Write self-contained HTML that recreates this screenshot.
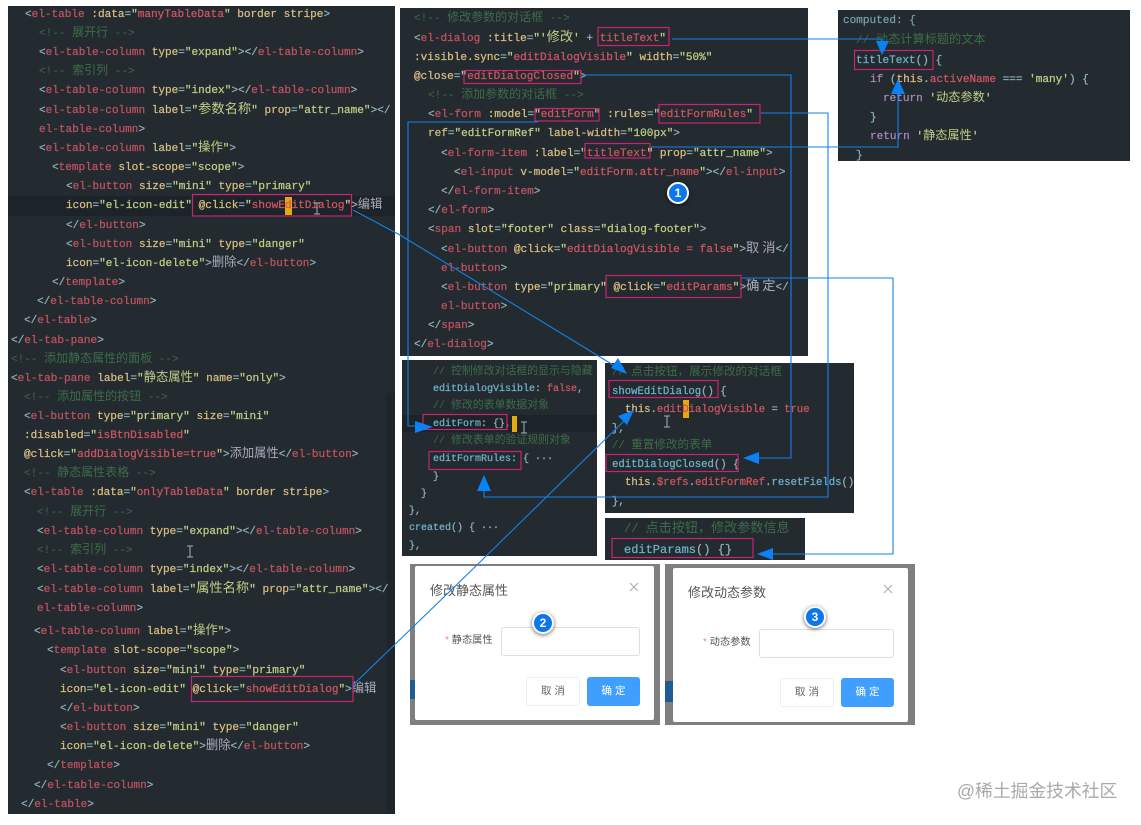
<!DOCTYPE html>
<html><head><meta charset="utf-8"><style>
html,body{margin:0;padding:0;background:#fff}
#r{position:relative;width:1141px;height:825px;overflow:hidden;background:#fff;font-family:"Liberation Sans","Noto Sans CJK SC",sans-serif}
.p{position:absolute;background:#232b31;overflow:hidden}
.l{position:absolute;margin-top:1px;white-space:pre;font-family:"Liberation Mono","Noto Sans CJK SC",monospace;font-size:11.05px;line-height:18px;height:18px;color:#8fb0b5;filter:blur(.3px);-webkit-text-stroke:.25px}
.l b{font-weight:normal;color:#c0525e}
.l i{font-style:normal;color:#d8bd80}
.l s{text-decoration:none;color:#c0cd85}
.l u{text-decoration:none;color:#3d6c47;-webkit-text-stroke:0}
.l em{font-style:normal;color:#cf5560}
.l var{font-style:normal;font-family:"Noto Sans CJK SC",sans-serif;font-size:12.3px;line-height:0;-webkit-text-stroke:0}
.l u var{font-size:12px}
.l var.w{font-size:13.26px}
.l kbd{font-family:inherit;font-size:inherit;line-height:0;color:#6fb0c8}
.l.f{font-size:10px}.l.f var,.l.f u var{font-size:10.9px}
.l.g{font-size:10.62px}.l.g var,.l.g u var{font-size:11.6px}
.l.h{font-size:12px}.l.h var,.l.h u var{font-size:13.1px}
.l.k var,.l.k u var{font-size:12.2px}
.a{position:absolute;box-sizing:border-box}
.c{position:absolute;width:22px;height:22px;box-sizing:border-box;border:2px solid #fff;border-radius:50%;background:#0b76ee;color:#fff;font:bold 12px/18px "Liberation Sans",sans-serif;text-align:center;box-shadow:0 1px 4px rgba(0,0,0,.6)}
.t{position:absolute;white-space:pre;color:#555;filter:blur(.2px)}
</style></head><body><div id="r">

<div class="p" style="left:8px;top:6px;width:387px;height:808px"></div>
<div class="a" style="left:8px;top:196px;width:387px;height:20px;background:#1d2429"></div>
<div class="a" style="left:386px;top:393px;width:9px;height:421px;background:#1e262b"></div>
<div class="a" style="left:285px;top:197px;width:7px;height:18px;background:#e5a90f"></div>

<div class="l" style="left:25px;top:5px">&lt;<b>el-table</b> <i>:data</i>=<s>"</s><em>manyTableData</em><s>"</s> <i>border</i> <i>stripe</i>&gt;</div>
<div class="l" style="left:39px;top:24px"><u>&lt;!-- <var>展开行</var> --&gt;</u></div>
<div class="l" style="left:39px;top:43px">&lt;<b>el-table-column</b> <i>type</i>=<s>"expand"</s>&gt;&lt;/<b>el-table-column</b>&gt;</div>
<div class="l" style="left:39px;top:62px"><u>&lt;!-- <var>索引列</var> --&gt;</u></div>
<div class="l" style="left:39px;top:81px">&lt;<b>el-table-column</b> <i>type</i>=<s>"index"</s>&gt;&lt;/<b>el-table-column</b>&gt;</div>
<div class="l" style="left:39px;top:101px">&lt;<b>el-table-column</b> <i>label</i>=<s>"<var class="w">参数名称</var>"</s> <i>prop</i>=<s>"attr_name"</s>&gt;&lt;/</div>
<div class="l" style="left:39px;top:120px"><b>el-table-column</b>&gt;</div>
<div class="l" style="left:39px;top:139px">&lt;<b>el-table-column</b> <i>label</i>=<s>"<var>操作</var>"</s>&gt;</div>
<div class="l" style="left:52px;top:158px">&lt;<b>template</b> <i>slot-scope</i>=<s>"scope"</s>&gt;</div>
<div class="l" style="left:66px;top:177px">&lt;<b>el-button</b> <i>size</i>=<s>"mini"</s> <i>type</i>=<s>"primary"</s></div>
<div class="l" style="left:66px;top:196px"><i>icon</i>=<s>"el-icon-edit"</s> <i>@click</i>=<s>"</s><em>showEditDialog</em><s>"</s>&gt;<var style="color:#aab">编辑</var></div>
<div class="l" style="left:66px;top:216px">&lt;/<b>el-button</b>&gt;</div>
<div class="l" style="left:66px;top:235px">&lt;<b>el-button</b> <i>size</i>=<s>"mini"</s> <i>type</i>=<s>"danger"</s></div>
<div class="l" style="left:66px;top:254px"><i>icon</i>=<s>"el-icon-delete"</s>&gt;<var style="color:#aab">删除</var>&lt;/<b>el-button</b>&gt;</div>
<div class="l" style="left:52px;top:273px">&lt;/<b>template</b>&gt;</div>
<div class="l" style="left:37px;top:292px">&lt;/<b>el-table-column</b>&gt;</div>
<div class="l" style="left:24px;top:311px">&lt;/<b>el-table</b>&gt;</div>
<div class="l" style="left:11px;top:331px">&lt;/<b>el-tab-pane</b>&gt;</div>
<div class="l" style="left:11px;top:350px"><u>&lt;!-- <var>添加静态属性的面板</var> --&gt;</u></div>
<div class="l" style="left:11px;top:369px">&lt;<b>el-tab-pane</b> <i>label</i>=<s>"<var>静态属性</var>"</s> <i>name</i>=<s>"only"</s>&gt;</div>
<div class="l" style="left:24px;top:388px"><u>&lt;!-- <var>添加属性的按钮</var> --&gt;</u></div>
<div class="l" style="left:24px;top:407px">&lt;<b>el-button</b> <i>type</i>=<s>"primary"</s> <i>size</i>=<s>"mini"</s></div>
<div class="l" style="left:24px;top:426px"><i>:disabled</i>=<s>"</s><em>isBtnDisabled</em><s>"</s></div>
<div class="l" style="left:24px;top:445px"><i>@click</i>=<s>"</s><em>addDialogVisible=true</em><s>"</s>&gt;<var style="color:#aab">添加属性</var>&lt;/<b>el-button</b>&gt;</div>
<div class="l" style="left:24px;top:464px"><u>&lt;!-- <var>静态属性表格</var> --&gt;</u></div>
<div class="l" style="left:24px;top:483px">&lt;<b>el-table</b> <i>:data</i>=<s>"</s><em>onlyTableData</em><s>"</s> <i>border</i> <i>stripe</i>&gt;</div>
<div class="l" style="left:37px;top:503px"><u>&lt;!-- <var>展开行</var> --&gt;</u></div>
<div class="l" style="left:37px;top:522px">&lt;<b>el-table-column</b> <i>type</i>=<s>"expand"</s>&gt;&lt;/<b>el-table-column</b>&gt;</div>
<div class="l" style="left:37px;top:541px"><u>&lt;!-- <var>索引列</var> --&gt;</u></div>
<div class="l" style="left:37px;top:560px">&lt;<b>el-table-column</b> <i>type</i>=<s>"index"</s>&gt;&lt;/<b>el-table-column</b>&gt;</div>
<div class="l" style="left:37px;top:580px">&lt;<b>el-table-column</b> <i>label</i>=<s>"<var class="w">属性名称</var>"</s> <i>prop</i>=<s>"attr_name"</s>&gt;&lt;/</div>
<div class="l" style="left:37px;top:599px"><b>el-table-column</b>&gt;</div>
<div class="l" style="left:34px;top:622px">&lt;<b>el-table-column</b> <i>label</i>=<s>"<var>操作</var>"</s>&gt;</div>
<div class="l" style="left:47px;top:641px">&lt;<b>template</b> <i>slot-scope</i>=<s>"scope"</s>&gt;</div>
<div class="l" style="left:60px;top:661px">&lt;<b>el-button</b> <i>size</i>=<s>"mini"</s> <i>type</i>=<s>"primary"</s></div>
<div class="l" style="left:60px;top:680px"><i>icon</i>=<s>"el-icon-edit"</s> <i>@click</i>=<s>"</s><em>showEditDialog</em><s>"</s>&gt;<var style="color:#aab">编辑</var></div>
<div class="l" style="left:60px;top:699px">&lt;/<b>el-button</b>&gt;</div>
<div class="l" style="left:60px;top:718px">&lt;<b>el-button</b> <i>size</i>=<s>"mini"</s> <i>type</i>=<s>"danger"</s></div>
<div class="l" style="left:60px;top:737px"><i>icon</i>=<s>"el-icon-delete"</s>&gt;<var style="color:#aab">删除</var>&lt;/<b>el-button</b>&gt;</div>
<div class="l" style="left:47px;top:756px">&lt;/<b>template</b>&gt;</div>
<div class="l" style="left:34px;top:776px">&lt;/<b>el-table-column</b>&gt;</div>
<div class="l" style="left:21px;top:795px">&lt;/<b>el-table</b>&gt;</div>

<div class="p" style="left:400px;top:8px;width:408px;height:348px"></div>
<div class="l" style="left:414px;top:9px"><u>&lt;!-- <var>修改参数的对话框</var> --&gt;</u></div>
<div class="l" style="left:414px;top:29px">&lt;<b>el-dialog</b> <i>:title</i>=<s>"'<var class="w">修改</var>'</s> + <em>titleText</em><s>"</s></div>
<div class="l" style="left:414px;top:48px"><i>:visible.sync</i>=<s>"</s><em>editDialogVisible</em><s>"</s> <i>width</i>=<s>"50%"</s></div>
<div class="l" style="left:414px;top:67px"><i>@close</i>=<s>"</s><em>editDialogClosed</em><s>"</s>&gt;</div>
<div class="l" style="left:428px;top:86px"><u>&lt;!-- <var>添加参数的对话框</var> --&gt;</u></div>
<div class="l" style="left:428px;top:105px">&lt;<b>el-form</b> <i>:model</i>=<s>"</s><em>editForm</em><s>"</s> <i>:rules</i>=<s>"</s><em>editFormRules</em><s>"</s></div>
<div class="l" style="left:428px;top:124px"><i>ref</i>=<s>"editFormRef"</s> <i>label-width</i>=<s>"100px"</s>&gt;</div>
<div class="l" style="left:441px;top:144px">&lt;<b>el-form-item</b> <i>:label</i>=<s>"</s><em>titleText</em><s>"</s> <i>prop</i>=<s>"attr_name"</s>&gt;</div>
<div class="l" style="left:454px;top:163px">&lt;<b>el-input</b> <i>v-model</i>=<s>"</s><em>editForm.attr_name</em><s>"</s>&gt;&lt;/<b>el-input</b>&gt;</div>
<div class="l" style="left:441px;top:182px">&lt;/<b>el-form-item</b>&gt;</div>
<div class="l" style="left:428px;top:201px">&lt;/<b>el-form</b>&gt;</div>
<div class="l" style="left:428px;top:220px">&lt;<b>span</b> <i>slot</i>=<s>"footer"</s> <i>class</i>=<s>"dialog-footer"</s>&gt;</div>
<div class="l" style="left:441px;top:240px">&lt;<b>el-button</b> <i>@click</i>=<s>"</s><em>editDialogVisible = false</em><s>"</s>&gt;<var class="w" style="color:#aab">取 消</var>&lt;/</div>
<div class="l" style="left:441px;top:259px"><b>el-button</b>&gt;</div>
<div class="l" style="left:441px;top:278px">&lt;<b>el-button</b> <i>type</i>=<s>"primary"</s> <i>@click</i>=<s>"</s><em>editParams</em><s>"</s>&gt;<var class="w" style="color:#aab">确 定</var>&lt;/</div>
<div class="l" style="left:441px;top:297px"><b>el-button</b>&gt;</div>
<div class="l" style="left:428px;top:316px">&lt;/<b>span</b>&gt;</div>
<div class="l" style="left:414px;top:335px">&lt;/<b>el-dialog</b>&gt;</div>

<div class="p" style="left:838px;top:10px;width:292px;height:151px"></div>
<div class="l k" style="left:843px;top:11px;color:#6fa0ae">computed: {</div>
<div class="l k" style="left:856px;top:31px"><u>// <var>动态计算标题的文本</var></u></div>
<div class="l k" style="left:856px;top:51px"><kbd>titleText</kbd>() {</div>
<div class="l k" style="left:870px;top:70px"><span style="color:#a78ab8">if</span> (<i>this</i>.<em>activeName</em> === <s>'many'</s>) {</div>
<div class="l k" style="left:883px;top:89px"><span style="color:#a78ab8">return</span> <s>'<var>动态参数</var>'</s></div>
<div class="l k" style="left:870px;top:108px">}</div>
<div class="l k" style="left:870px;top:127px"><span style="color:#a78ab8">return</span> <s>'<var>静态属性</var>'</s></div>
<div class="l k" style="left:856px;top:146px">}</div>

<div class="p" style="left:402px;top:360px;width:195px;height:196px"></div>
<div class="a" style="left:402px;top:415px;width:195px;height:17px;background:#1d2429"></div>
<div class="a" style="left:512px;top:416px;width:5px;height:16px;background:#e5a90f"></div>
<div class="l f" style="left:433px;top:363px"><u>// <var>控制修改对话框的显示与隐藏</var></u></div>
<div class="l f" style="left:433px;top:380px"><kbd>editDialogVisible</kbd>: <em>false</em>,</div>
<div class="l f" style="left:433px;top:397px"><u>// <var>修改的表单数据对象</var></u></div>
<div class="l f" style="left:433px;top:415px"><kbd>editForm</kbd>: {},</div>
<div class="l f" style="left:433px;top:432px"><u>// <var>修改表单的验证规则对象</var></u></div>
<div class="l f" style="left:433px;top:450px"><kbd>editFormRules</kbd>: { ···</div>
<div class="l f" style="left:433px;top:468px">}</div>
<div class="l f" style="left:421px;top:485px">}</div>
<div class="l f" style="left:409px;top:502px">},</div>
<div class="l f" style="left:409px;top:519px"><kbd>created</kbd>() { ···</div>
<div class="l f" style="left:409px;top:537px">},</div>

<div class="p" style="left:605px;top:363px;width:249px;height:150px"></div>
<div class="a" style="left:683px;top:400px;width:6px;height:18px;background:#e5a90f"></div>
<div class="l g" style="left:612px;top:363px"><u>// <var>点击按钮，展示修改的对话框</var></u></div>
<div class="l g" style="left:612px;top:382px"><kbd>showEditDialog</kbd>() {</div>
<div class="l g" style="left:625px;top:400px"><i>this</i>.<em>editDialogVisible</em> = <em>true</em></div>
<div class="l g" style="left:612px;top:419px">},</div>
<div class="l g" style="left:612px;top:436px"><u>// <var>重置修改的表单</var></u></div>
<div class="l g" style="left:612px;top:455px"><kbd>editDialogClosed</kbd>() {</div>
<div class="l g" style="left:625px;top:473px"><i>this</i>.<em>$refs</em>.<em>editFormRef</em>.<kbd>resetFields</kbd>()</div>
<div class="l g" style="left:612px;top:492px">},</div>

<div class="p" style="left:605px;top:518px;width:200px;height:42px"></div>
<div class="l h" style="left:624px;top:519px"><u>// <var>点击按钮，修改参数信息</var></u></div>
<div class="l h" style="left:624px;top:540px"><kbd>editParams</kbd>() {}</div>

<div class="a" style="left:410px;top:564px;width:250px;height:161px;background:#7f7f7f"></div>
<div class="a" style="left:410px;top:680px;width:5px;height:19px;background:#1f5c94"></div>
<div class="a" style="left:415px;top:566px;width:239px;height:154px;background:#fff;border-radius:2px"></div>
<div class="t" style="left:430px;top:582px;font-size:13px;line-height:18px">修改静态属性</div>
<div class="t" style="left:445px;top:634px;font-size:10.2px;line-height:14px"><span style="color:#e88">*</span> 静态属性</div>
<div class="a" style="left:501px;top:627px;width:139px;height:29px;border:1px solid #dcdfe6;border-radius:3px"></div>
<div class="a" style="left:526px;top:677px;width:54px;height:29px;border:1px solid #ebeef2;border-radius:3px;color:#666;font-size:10.5px;line-height:27px;text-align:center">取 消</div>
<div class="a" style="left:587px;top:677px;width:53px;height:29px;background:#409eff;border-radius:3px;color:#fff;font-size:10.5px;line-height:29px;text-align:center">确 定</div>

<div class="a" style="left:665px;top:564px;width:250px;height:161px;background:#7f7f7f"></div>
<div class="a" style="left:665px;top:681px;width:8px;height:21px;background:#1f5c94"></div>
<div class="a" style="left:673px;top:568px;width:235px;height:154px;background:#fff;border-radius:2px"></div>
<div class="t" style="left:688px;top:584px;font-size:13px;line-height:18px">修改动态参数</div>
<div class="t" style="left:703px;top:636px;font-size:10.2px;line-height:14px"><span style="color:#e88">*</span> 动态参数</div>
<div class="a" style="left:759px;top:629px;width:135px;height:29px;border:1px solid #dcdfe6;border-radius:3px"></div>
<div class="a" style="left:780px;top:678px;width:54px;height:29px;border:1px solid #ebeef2;border-radius:3px;color:#666;font-size:10.5px;line-height:27px;text-align:center">取 消</div>
<div class="a" style="left:841px;top:678px;width:53px;height:29px;background:#409eff;border-radius:3px;color:#fff;font-size:10.5px;line-height:29px;text-align:center">确 定</div>

<svg width="1141" height="825" style="position:absolute;left:0;top:0" fill="none">
<g stroke="#aaa" stroke-width="1">
<path d="M630 583L638 591M638 583L630 591"/>
<path d="M884 585L892 593M892 585L884 593"/>
</g>
<g stroke="#c9246f" stroke-width="1.2">
<rect x="192.5" y="194.5" width="159" height="21.5"/>
<rect x="191.5" y="676.5" width="161.5" height="25"/>
<rect x="598" y="27.5" width="71" height="18"/>
<rect x="464" y="70.5" width="117" height="13"/>
<rect x="535" y="108.5" width="64" height="12.5"/>
<rect x="659" y="104.5" width="101" height="18.5"/>
<rect x="585" y="143.5" width="65" height="14.5"/>
<rect x="606" y="275.5" width="135" height="22"/>
<rect x="854.5" y="50.5" width="78.5" height="19"/>
<rect x="423" y="414.5" width="84" height="15"/>
<rect x="429" y="451.5" width="92" height="18"/>
<rect x="609" y="380.5" width="109" height="17"/>
<rect x="606" y="454.5" width="132" height="17"/>
<rect x="612" y="538.5" width="141" height="19"/>
</g>
<g stroke="#1681e6" stroke-width="1.1">
<path d="M672 39H882V50"/>
<path d="M761 113H828V497H484V485"/>
<path d="M651 147H898V90"/>
<path d="M742 278H893V554H770"/>
<path d="M582 75H791V458H755"/>
<path d="M538 122H408V426H420"/>
<path d="M353 210L400 235L605 360L618 368"/>
<path d="M353 685L477 565L625 420"/>
</g>
<g fill="#0a82f5">
<path d="M882 55L876 41H889Z"/>
<path d="M898 79L891 94H905Z"/>
<path d="M484 475L477 491H491Z"/>
<path d="M757 554L773 548V560Z"/>
<path d="M743 458L759 452V464Z"/>
<path d="M433 427L415 421V433Z"/>
<path d="M627 374L611 368L618 358Z"/>
<path d="M634 410L627 425L618 416Z"/>
</g>
<g stroke="#ccd" stroke-width="1" opacity=".8">
<path d="M314 203h6M317 203v11M314 214h6"/>
<path d="M187 546h6M190 546v11M187 557h6"/>
<path d="M664 416h6M667 416v11M664 427h6"/>
<path d="M521 422h6M524 422v11M521 433h6"/>
</g>
</svg>

<div class="c" style="left:667px;top:182px">1</div>
<div class="c" style="left:532px;top:612px">2</div>
<div class="c" style="left:804px;top:606px">3</div>

<div class="t" style="left:957px;top:779px;font-size:17.8px;line-height:24px;color:#a9a9a9">@稀土掘金技术社区</div>
</div></body></html>
